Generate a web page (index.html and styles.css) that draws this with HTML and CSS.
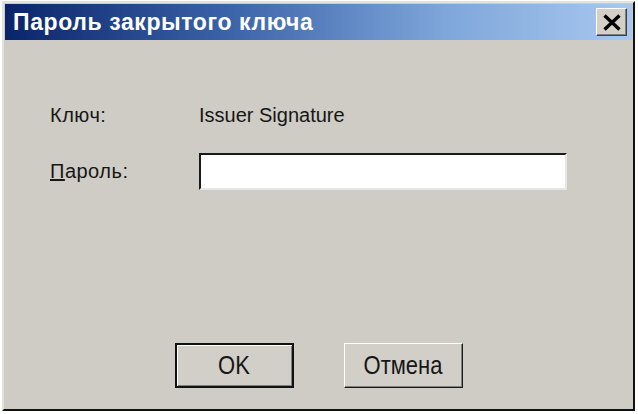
FILE: index.html
```html
<!DOCTYPE html>
<html lang="ru">
<head>
<meta charset="utf-8">
<title>Пароль закрытого ключа</title>
<link rel="stylesheet" href="styles.css">
</head>
<body>
<div class="window">
  <div class="titlebar">
    <span class="title">Пароль закрытого ключа</span>
    <button class="close" type="button" aria-label="Закрыть">
      <svg width="20" height="17" viewBox="0 0 20 17"><path d="M2.5 1.5 L17.5 15.5 M17.5 1.5 L2.5 15.5" stroke="#000" stroke-width="3.4" fill="none"/></svg>
    </button>
  </div>
  <div class="content">
    <div class="form">
      <div class="label">Ключ:</div>
      <div class="value">Issuer Signature</div>
      <div class="label"><u>П</u>ароль:</div>
      <div class="field"></div>
    </div>
    <div class="buttons">
      <div class="btn default"><span class="btn-text">OK</span></div>
      <div class="btn"><span class="btn-text">Отмена</span></div>
    </div>
  </div>
</div>
</body>
</html>
```

FILE: styles.css
```css
html, body {
  margin: 0;
  padding: 0;
  background: #ffffff;
}
body {
  font-family: "Liberation Sans", Arial, sans-serif;
  color: #161616;
}
.window {
  box-sizing: border-box;
  width: 633px;
  height: 410px;
  margin: 1px 0 0 2px;
  background: #cfccc5;
  border: 2px solid;
  border-color: #e4e2dc #111111 #111111 #e4e2dc;
  padding: 1px;
  display: flex;
  flex-direction: column;
}
.titlebar {
  height: 36px;
  flex: none;
  background: linear-gradient(to right, #0a246a 0%, #3a62a8 35%, #7ea6da 70%, #a8c8ef 100%);
  display: flex;
  align-items: center;
  justify-content: space-between;
  padding: 0 5px 0 8px;
}
.title {
  color: #ffffff;
  font-weight: bold;
  font-size: 23px;
  letter-spacing: 0.6px;
}
.close {
  width: 31px;
  height: 28px;
  padding: 0;
  margin: 0;
  background: #d4d0c8;
  border: 1px solid;
  border-color: #ffffff #404040 #404040 #ffffff;
  box-shadow: inset -1px -1px 0 #808080;
  display: flex;
  align-items: center;
  justify-content: center;
}
.content {
  flex: 1;
  display: flex;
  flex-direction: column;
  padding: 64px 0 20px 45px;
}
.form {
  display: grid;
  grid-template-columns: 149px 368px;
  grid-template-rows: 22px 37px;
  row-gap: 27px;
  align-items: center;
  font-size: 20px;
}
.label {
  letter-spacing: 0.5px;
}
.field {
  box-sizing: border-box;
  height: 37px;
  background: #ffffff;
  border: 2px solid;
  border-color: #1a1a1a #e8e6e2 #e8e6e2 #1a1a1a;
}
.buttons {
  margin-top: auto;
  display: flex;
  justify-content: center;
  gap: 50px;
  margin-left: -45px;
}
.btn {
  box-sizing: border-box;
  width: 119px;
  height: 45px;
  background: #d2cfc8;
  border: 1px solid;
  border-color: #ffffff #1a1a1a #1a1a1a #ffffff;
  box-shadow: inset -1px -1px 0 #808080;
  display: flex;
  align-items: center;
  justify-content: center;
  font-size: 22px;
}
.btn-text {
  display: inline-block;
  transform: scaleY(1.2);
}
.btn.default {
  border: 2px solid #111111;
  box-shadow: inset 1px 1px 0 #ffffff, inset -1px -1px 0 #808080;
}
```
